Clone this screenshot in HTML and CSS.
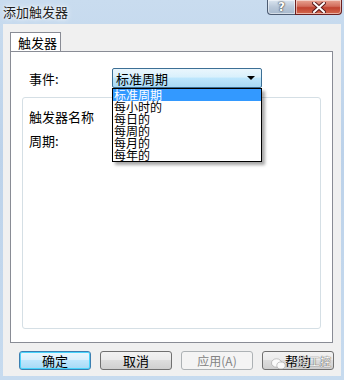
FILE: index.html
```html
<!DOCTYPE html>
<html lang="zh">

<head>
    <meta charset="UTF-8" />
    <title>添加触发器</title>
    <link rel="stylesheet" href="styles.css">
</head>

<body>
    <div class="window">
        <!-- 标题栏 -->
        <div class="titlebar">
            <span class="title">添加触发器</span>
            <div class="caption-buttons">
                <div class="cap-btn help">?</div>
                <div class="cap-btn close">
                    <svg width="14" height="11" viewBox="0 0 14 11">
                        <path d="M2 1 L12 10 M12 1 L2 10" stroke="#5a1c1c" stroke-width="4" stroke-linecap="square" />
                        <path d="M2 1 L12 10 M12 1 L2 10" stroke="#fff" stroke-width="2" stroke-linecap="square" />
                    </svg>
                </div>
            </div>
        </div>

        <div class="client">
            <div class="tabs">
                <div class="tab">触发器</div>
            </div>

            <div class="panel">
                <div class="event-row">
                    <span class="label">事件:</span>
                    <div class="combo">
                        <span>标准周期</span>
                        <span class="arrow"></span>
                    </div>
                </div>

                <div class="group">
                    <div class="field">触发器名称</div>
                    <div class="field">周期:</div>
                </div>

                <!-- 下拉列表 -->
                <ul class="dropdown">
                    <li class="selected">标准周期</li>
                    <li>每小时的</li>
                    <li>每日的</li>
                    <li>每周的</li>
                    <li>每月的</li>
                    <li>每年的</li>
                </ul>
            </div>

            <div class="buttons">
                <div class="btn default">确定</div>
                <div class="btn">取消</div>
                <div class="btn disabled">应用(A)</div>
                <div class="btn help-btn">
                    帮助
                    <span class="watermark">
                        <svg width="15" height="12" viewBox="0 0 15 12">
                            <ellipse cx="5.5" cy="5" rx="5" ry="4.2" fill="#fff" stroke="#9a9a9a" stroke-width="0.6" />
                            <ellipse cx="10" cy="7.5" rx="4.2" ry="3.5" fill="#fff" stroke="#9a9a9a" stroke-width="0.6" />
                        </svg>
                    </span>
                    <span class="wm-text">指工控</span>
                </div>
            </div>
        </div>
    </div>
</body>

</html>
```

FILE: styles.css
```css
body {
    margin: 0;
    font-family: "Noto Sans CJK SC", "Liberation Sans", sans-serif;
    font-size: 12px;
    color: #000;
}

.window {
    width: 344px;
    height: 380px;
    background: linear-gradient(180deg, #c9dcef 0%, #bcd2ea 40%, #c7dbef 100%);
    display: flex;
    flex-direction: column;
    overflow: hidden;
}

.titlebar {
    height: 24px;
    position: relative;
}

.title {
    position: absolute;
    left: 3px;
    top: 2px;
    font-size: 13px;
    line-height: 20px;
    color: #1e1e1e;
    text-shadow: 0 0 6px #fff, 0 0 3px #fff;
}

.caption-buttons {
    position: absolute;
    right: 2px;
    top: 0;
    display: flex;
}

.cap-btn {
    height: 14px;
    display: flex;
    align-items: center;
    justify-content: center;
    border: 1px solid #4d5c72;
    border-top: none;
    box-shadow: inset 0 0 0 1px rgba(255, 255, 255, 0.5);
}

.help {
    width: 27px;
    border-radius: 0 0 0 4px;
    border-right: none;
    background: linear-gradient(180deg, #dbe5f0 0%, #b9c8d9 50%, #a7b9cd 100%);
    color: #fff;
    font-family: "DejaVu Sans", sans-serif;
    font-weight: bold;
    font-size: 12px;
    text-shadow: 0 0 2px #333, 0 0 1px #333;
}

.close {
    width: 45px;
    border-radius: 0 0 4px 0;
    border-color: #6b2020;
    background: linear-gradient(180deg, #e8a493 0%, #d26d5c 45%, #c1422f 55%, #d46a4f 100%);
}

.client {
    flex: 1;
    margin: 0 3px 4px 3px;
    background: #f0f0f0;
    display: flex;
    flex-direction: column;
}

.tabs {
    display: flex;
    padding: 7px 0 0 7px;
}

.tab {
    width: 51px;
    height: 20px;
    border: 1px solid #898c95;
    border-bottom: none;
    background: #fff;
    line-height: 20px;
    padding-left: 1px;
    box-sizing: border-box;
    font-size: 13px;
    text-indent: 6px;
    position: relative;
    top: 1px;
}

.panel {
    margin: 0 8px 0 7px;
    height: 292px;
    border: 1px solid #898c95;
    background: #fff;
    position: relative;
    box-sizing: border-box;
}

.event-row {
    display: flex;
    align-items: center;
    margin-top: 16px;
    padding-left: 18px;
    height: 20px;
}

.label {
    width: 83px;
    font-size: 13px;
}

.combo {
    width: 150px;
    height: 20px;
    box-sizing: border-box;
    border: 1px solid #3c6f95;
    border-radius: 2px;
    background: linear-gradient(180deg, #eaf6fd 0%, #d9f0fc 45%, #bee6fd 50%, #a7d9f5 100%);
    display: flex;
    align-items: center;
    justify-content: space-between;
    padding: 0 4px 0 3px;
    font-size: 13px;
}

.arrow {
    width: 0;
    height: 0;
    border-left: 4px solid transparent;
    border-right: 4px solid transparent;
    border-top: 4px solid #000;
    margin-right: 2px;
}

.group {
    margin: 9px 11px 0 11px;
    height: 232px;
    border: 1px solid #d5dfe5;
    border-radius: 3px;
    padding: 10px 0 0 6px;
    box-sizing: border-box;
}

.field {
    font-size: 13px;
    height: 24px;
    line-height: 18px;
}

.dropdown {
    position: absolute;
    left: 101px;
    top: 36px;
    width: 150px;
    margin: 0;
    padding: 0;
    list-style: none;
    background: #fff;
    border: 1px solid #000;
    box-sizing: border-box;
    box-shadow: 3px 3px 3px rgba(0, 0, 0, 0.35);
}

.dropdown li {
    height: 12px;
    line-height: 12px;
    font-size: 12px;
    padding-left: 1px;
    white-space: nowrap;
}

.dropdown li.selected {
    background: #3399ff;
    color: #fff;
}

.buttons {
    display: flex;
    gap: 9px;
    padding: 8px 0 0 16px;
}

.btn {
    width: 72px;
    height: 19px;
    box-sizing: border-box;
    border: 1px solid #707070;
    border-radius: 3px;
    background: linear-gradient(180deg, #f2f2f2 0%, #ebebeb 45%, #dddddd 50%, #cfcfcf 100%);
    display: flex;
    align-items: center;
    justify-content: center;
    font-size: 13px;
    position: relative;
    white-space: nowrap;
}

.btn.default {
    border-color: #3c7fb1;
    box-shadow: inset 0 0 0 1px #48d4fc;
    background: linear-gradient(180deg, #eaf6fd 0%, #d9f0fc 45%, #bee6fd 50%, #a7d9f5 100%);
}

.btn.disabled {
    border-color: #adb2b5;
    background: #f4f4f4;
    color: #838383;
    font-size: 12px;
}

.watermark {
    position: absolute;
    left: 8px;
    top: 3px;
    opacity: 0.9;
}

.wm-text {
    position: absolute;
    right: 2px;
    top: 2px;
    line-height: 14px;
    color: #fff;
    font-size: 11px;
    text-shadow: 0 0 1px #333, 0 0 1px #333;
    opacity: 0.85;
}
```
